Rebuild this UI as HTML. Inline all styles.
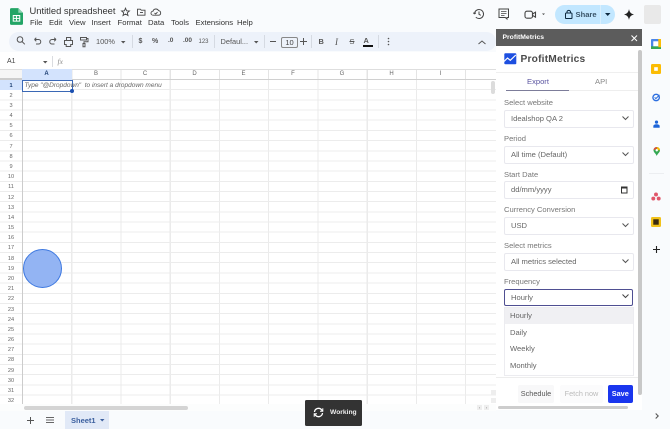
<!DOCTYPE html>
<html><head><meta charset="utf-8"><style>
html,body{margin:0;padding:0;background:#f9fbfd}
body{width:670px;height:429px;overflow:hidden;position:relative;background:#f9fbfd;font-family:"Liberation Sans",sans-serif;color:#444;filter:blur(.3px)}
.a{position:absolute;white-space:nowrap}
.m{top:18px;font-size:7.7px;line-height:10px;color:#333}
.t{top:37px;font-size:7.4px;line-height:10px;color:#555}
.ch{top:69px;height:11px;line-height:11px;font-size:6px;color:#666;text-align:center;width:49px}
.r{left:0;width:22px;text-align:center;font-size:5.6px;line-height:10px;color:#666;height:10px}
.lb{left:504px;font-size:7.6px;line-height:10px;color:#777}
.sel{left:504px;width:127.500px;height:16px;background:#fff;border:1px solid #e8e8ee;border-radius:2px;box-sizing:content-box;font-size:7.6px;line-height:16px;color:#666;text-indent:6px}
.opt{left:510px;font-size:7.6px;line-height:10px;color:#666}
svg{position:absolute;overflow:visible}
</style></head><body>

<!-- header -->
<svg style="left:10px;top:8px" width="13" height="17" viewBox="0 0 14 18"><path d="M1.500 0H9l5 5v11.500a1.500 1.500 0 0 1-1.500 1.500H1.500A1.500 1.500 0 0 1 0 16.500V1.500A1.500 1.500 0 0 1 1.500 0z" fill="#23a566"/><path d="M9 0l5 5H9z" fill="#8ed1b1"/><path d="M3.500 8h7v6h-7z" fill="none" stroke="#fff" stroke-width="1.100"/><path d="M3.500 11h7M7 8v6" stroke="#fff" stroke-width="1"/></svg>
<div class="a" style="left:29.500px;top:4px;font-size:9.400px;line-height:13px;color:#333">Untitled spreadsheet</div>
<svg style="left:121px;top:5.500px" width="50" height="12" viewBox="0 0 50 12" fill="none" stroke="#444" stroke-width=".9"><path d="M4.500 2.200l1.100 2.600 2.800.2-2.100 1.800.7 2.700-2.500-1.500L2 9.500l.7-2.700L.6 5l2.800-.2z"/><path d="M16.500 3.200h2.800l1 1h3.700v5h-7.500z"/><path d="M19 6.500h3"/><path d="M32 9.200a2 2 0 0 1 0-4 3 3 0 0 1 5.600-.5 2.300 2.300 0 0 1 .4 4.500z"/><path d="M33.500 7l1.200 1 1.800-1.900"/></svg>
<div class="a m" style="left:30px">File</div><div class="a m" style="left:49px">Edit</div><div class="a m" style="left:69px">View</div><div class="a m" style="left:91.500px">Insert</div><div class="a m" style="left:117.500px">Format</div><div class="a m" style="left:148px">Data</div><div class="a m" style="left:171px">Tools</div><div class="a m" style="left:195.500px">Extensions</div><div class="a m" style="left:237px">Help</div>

<svg style="left:473px;top:8px" width="12" height="12" viewBox="0 0 12 12" fill="none" stroke="#444" stroke-width="1"><path d="M1.500 6a4.500 4.500 0 1 1 1.300 3.200M1.500 6L.3 4.700M1.500 6l1.300-1.200"/><path d="M6 3.500V6.300l1.800 1"/></svg>
<svg style="left:498px;top:8px" width="12" height="12" viewBox="0 0 12 12" fill="none" stroke="#444" stroke-width="1"><path d="M1 1h9.500v8.500H9V11L7.300 9.500H1z"/><path d="M3 3.500h5.500M3 5.500h5.500M3 7.500h3.500" stroke-width=".7"/></svg>
<svg style="left:524px;top:9px" width="22" height="12" viewBox="0 0 22 12" fill="none" stroke="#444" stroke-width="1.100"><rect x="1" y="2.200" width="7.500" height="7" rx="2"/><path d="M8.500 5l3-1.800v5l-3-1.800z"/><path d="M18 4.500h3L19.500 6z" fill="#444" stroke="none"/></svg>
<div class="a" style="left:555px;top:5px;width:60px;height:19px;background:#c2e7ff;border-radius:10px"></div>
<div class="a" style="left:600px;top:5px;width:1px;height:19px;background:#d8effd"></div>
<svg style="left:564px;top:9px" width="10" height="11" viewBox="0 0 10 11" fill="none" stroke="#0d2a40" stroke-width="1"><rect x="1.500" y="4" width="6.500" height="5.500" rx=".8"/><path d="M3 4V2.800a1.800 1.800 0 0 1 3.500 0V4"/></svg>
<div class="a" style="left:575.500px;top:9px;font-size:7.600px;line-height:11px;font-weight:bold;color:#3a5468">Share</div>
<svg style="left:605px;top:13px" width="6" height="4"><path d="M0 0h5.500L2.700 3z" fill="#0d2a40"/></svg>
<svg style="left:624px;top:9px" width="10" height="11" viewBox="0 0 10 11"><path d="M5 0c.5 3 1.800 4.700 5 5.500-3.200.8-4.500 2.500-5 5.500-.5-3-1.800-4.700-5-5.500C3.200 4.700 4.500 3 5 0z" fill="#222"/></svg>
<div class="a" style="left:644px;top:5px;width:17px;height:19px;background:#e9e9e9;border-radius:2px"></div>

<!-- toolbar -->
<div class="a" style="left:9px;top:32px;width:487px;height:19px;background:#edf2fa;border-radius:10px"></div>
<svg style="left:15px;top:32px" width="320" height="20" viewBox="0 0 320 20" fill="none" stroke="#555" stroke-width="1">
<circle cx="5" cy="7.500" r="2.800"/><path d="M7 9.500l2.800 2.800"/>
<path d="M19.500 7.500h4a2.200 2.200 0 0 1 0 4.500h-2.500M19.500 7.500l1.800-1.700M19.500 7.500l1.800 1.700"/>
<path d="M41 7.500h-4a2.200 2.200 0 0 0 0 4.500h2.500M41 7.500l-1.800-1.700M41 7.500l-1.800 1.700"/>
<path d="M49.500 8.500h8v4h-1.800v2h-4.500v-2h-1.700zM51.500 8.500V5.500h4.200v3"/>
<path d="M65.500 5.500h6v2.500h-6zM71.500 6.500H73v3.300H69v1.500M68 11.500h2v3.200h-2z"/>
</svg>
<div class="a t" style="left:96px">100%</div>
<svg style="left:120.500px;top:40.500px" width="5" height="3"><path d="M0 0h4.500L2.200 2.500z" fill="#555"/></svg>
<div class="a" style="left:132px;top:35px;width:1px;height:13px;background:#d5dae2"></div>
<div class="a t" style="left:138.500px;font-weight:bold;font-size:7px">$</div>
<div class="a t" style="left:152px;font-size:7px;font-weight:bold">%</div>
<div class="a t" style="left:168px;font-size:6.500px;top:36px;font-weight:bold">.0</div>
<div class="a t" style="left:183px;font-size:6.500px;top:36px;font-weight:bold">.00</div>
<div class="a t" style="left:198.500px;font-size:6px">123</div>
<div class="a" style="left:214px;top:35px;width:1px;height:13px;background:#d5dae2"></div>
<div class="a t" style="left:220.500px">Defaul...</div>
<svg style="left:253.500px;top:40.500px" width="5" height="3"><path d="M0 0h4.500L2.200 2.500z" fill="#555"/></svg>
<div class="a" style="left:264px;top:35px;width:1px;height:13px;background:#d5dae2"></div>
<div class="a" style="left:270px;top:41px;width:6px;height:1px;background:#555"></div>
<div class="a" style="left:281px;top:36.500px;width:15px;height:9.500px;border:1px solid #888;border-radius:2px;text-align:center;font-size:7.500px;line-height:9.500px;color:#444">10</div>
<svg style="left:300px;top:38px" width="7" height="7"><path d="M3.500 0v7M0 3.500h7" stroke="#555"/></svg>
<div class="a" style="left:311px;top:35px;width:1px;height:13px;background:#d5dae2"></div>
<div class="a t" style="left:318.500px;font-weight:bold">B</div>
<div class="a t" style="left:335px;font-style:italic;font-family:'Liberation Serif',serif;font-size:9px;top:36.500px">I</div>
<div class="a t" style="left:349.500px;text-decoration:line-through">S</div>
<div class="a t" style="left:363.500px;top:35.500px;font-weight:bold">A</div>
<div class="a" style="left:362.500px;top:45px;width:10.500px;height:1.500px;background:#111"></div>
<div class="a" style="left:378px;top:35px;width:1px;height:13px;background:#d5dae2"></div>
<svg style="left:386.500px;top:37px" width="3" height="10"><circle cx="1.500" cy="1.500" r=".8" fill="#555"/><circle cx="1.500" cy="4.500" r=".8" fill="#555"/><circle cx="1.500" cy="7.500" r=".8" fill="#555"/></svg>
<svg style="left:478px;top:39.500px" width="8" height="5"><path d="M.5 4L4 1l3.500 3" fill="none" stroke="#555"/></svg>

<!-- formula bar -->
<div class="a" style="left:0;top:52px;width:496px;height:17px;background:#fff"></div>
<div class="a" style="left:7px;top:56.500px;font-size:7px;line-height:10px;color:#444">A1</div>
<svg style="left:42.500px;top:60.500px" width="5" height="3"><path d="M0 0h4.500L2.200 2.500z" fill="#555"/></svg>
<div class="a" style="left:52px;top:56px;width:1px;height:11px;background:#dadce0"></div>
<div class="a" style="left:57.500px;top:56.500px;font-size:7.500px;line-height:10px;font-style:italic;font-family:'Liberation Serif',serif;color:#888">fx</div>

<!-- grid -->
<div class="a" style="left:0;top:69px;width:496px;height:335px;background-color:#fff;background-image:repeating-linear-gradient(to right,#ebebeb 0,#ebebeb 1px,transparent 1px,transparent 49.250px);background-position:22px 0;background-size:100% 100%"></div>
<div class="a" style="left:0;top:69px;width:22px;height:335px;background:#fff"></div>
<div class="a" style="left:0;top:80px;width:496px;height:324px;background-image:repeating-linear-gradient(to bottom,transparent 0,transparent 9.180px,#ececec 9.180px,#ececec 10.180px)"></div>
<div class="a" style="left:0;top:69px;width:496px;height:11px;background:#fff;border-top:1px solid #dedede;border-bottom:1px solid #d0d0d0;box-sizing:border-box;background-image:repeating-linear-gradient(to right,#e4e4e4 0,#e4e4e4 1px,transparent 1px,transparent 49.250px);background-position:22px 0"></div>
<div class="a" style="left:0;top:69px;width:22px;height:11px;background:#f5f5f5;border-top:1px solid #dedede;border-bottom:2px solid #cccccc;box-sizing:border-box"></div>
<div class="a" style="left:22px;top:69px;width:1px;height:335px;background:#cccccc"></div>
<div class="a" style="left:22px;top:69px;width:50px;height:11px;background:#d3e3fd"></div>
<div class="a" style="left:0;top:80px;width:22px;height:10px;background:#d3e3fd"></div>

<div class="a ch" style="left:22px;font-weight:bold;color:#1d3f73">A</div><div class="a ch" style="left:71.500px">B</div><div class="a ch" style="left:120.500px">C</div><div class="a ch" style="left:170px">D</div><div class="a ch" style="left:219px">E</div><div class="a ch" style="left:268.500px">F</div><div class="a ch" style="left:317.500px">G</div><div class="a ch" style="left:367px">H</div><div class="a ch" style="left:416px">I</div>

<div class="a r" style="top:80.500px;font-weight:bold;color:#1d3f73">1</div><div class="a r" style="top:90.700px">2</div><div class="a r" style="top:100.900px">3</div><div class="a r" style="top:111px">4</div><div class="a r" style="top:121.200px">5</div><div class="a r" style="top:131.400px">6</div><div class="a r" style="top:141.600px">7</div><div class="a r" style="top:151.800px">8</div><div class="a r" style="top:161.900px">9</div><div class="a r" style="top:172.100px">10</div><div class="a r" style="top:182.300px">11</div><div class="a r" style="top:192.500px">12</div><div class="a r" style="top:202.700px">13</div><div class="a r" style="top:212.800px">14</div><div class="a r" style="top:223px">15</div><div class="a r" style="top:233.200px">16</div><div class="a r" style="top:243.400px">17</div><div class="a r" style="top:253.600px">18</div><div class="a r" style="top:263.700px">19</div><div class="a r" style="top:273.900px">20</div><div class="a r" style="top:284.100px">21</div><div class="a r" style="top:294.300px">22</div><div class="a r" style="top:304.500px">23</div><div class="a r" style="top:314.600px">24</div><div class="a r" style="top:324.800px">25</div><div class="a r" style="top:335px">26</div><div class="a r" style="top:345.200px">27</div><div class="a r" style="top:355.400px">28</div><div class="a r" style="top:365.500px">29</div><div class="a r" style="top:375.700px">30</div><div class="a r" style="top:385.900px">31</div><div class="a r" style="top:396.100px">32</div>

<!-- selected cell -->
<div class="a" style="left:22px;top:80px;width:49px;height:10px;border:1px solid #3b68b5;box-sizing:content-box;margin:-.5px 0 0 0;background:#fff"></div>
<div class="a" style="left:70px;top:89px;width:4px;height:4px;border-radius:50%;background:#1a4fb0"></div>
<div class="a" style="left:24.500px;top:80.500px;font-size:6.500px;line-height:10px;font-style:italic;color:#666">Type "@Dropdown"&nbsp; to insert a dropdown menu</div>

<!-- circle -->
<div class="a" style="left:22.500px;top:249px;width:39px;height:39px;box-sizing:border-box;border-radius:50%;background:#93b4f3;border:1.500px solid #3d78e0"></div>

<!-- sheet scrollbars -->
<div class="a" style="left:491px;top:81px;width:4px;height:13px;background:#dcdcdc;border-radius:2px"></div>
<div class="a" style="left:0;top:404px;width:496px;height:7px;background:#fcfdfd"></div>
<div class="a" style="left:24px;top:405.500px;width:164px;height:4px;background:#d4d4d4;border-radius:2px"></div>
<div class="a" style="left:477px;top:405px;width:5px;height:5px;background:#eee;font-size:4px;line-height:5px;text-align:center;color:#777">‹</div>
<div class="a" style="left:484px;top:405px;width:5px;height:5px;background:#eee;font-size:4px;line-height:5px;text-align:center;color:#777">›</div>
<div class="a" style="left:491px;top:390px;width:5px;height:5px;background:#eee"></div>
<div class="a" style="left:491px;top:398px;width:5px;height:5px;background:#eee"></div>

<!-- bottom bar -->
<svg style="left:26.500px;top:416.500px" width="7" height="7"><path d="M3.500 0v7M0 3.500h7" stroke="#555"/></svg>
<svg style="left:45.500px;top:417px" width="8" height="6"><path d="M0 .5h8M0 3h8M0 5.500h8" stroke="#666"/></svg>
<div class="a" style="left:65px;top:411px;width:44px;height:18px;background:#e1e9f7"></div>
<div class="a" style="left:71px;top:415.500px;font-size:7.500px;line-height:10px;font-weight:bold;color:#3b5f9e">Sheet1</div>
<svg style="left:100px;top:419px" width="5" height="3"><path d="M0 0h4.500L2.200 2.500z" fill="#3b5f9e"/></svg>

<!-- Working toast -->
<div class="a" style="left:305px;top:399.500px;width:56.500px;height:26px;background:#333;border-radius:1.500px"></div>
<svg style="left:312.500px;top:407px" width="11" height="11" viewBox="0 0 11 11" fill="none" stroke="#fff" stroke-width="1.300"><path d="M1.500 5a4 4 0 0 1 7-2.300L9.500 4M9.500 6a4 4 0 0 1-7 2.300L1.500 7"/><path d="M9.800 1.200v3H7M1.200 9.800v-3H4" stroke-width="1"/></svg>
<div class="a" style="left:330px;top:408px;font-size:6.700px;line-height:10px;color:#eee;font-weight:bold">Working</div>

<!-- side panel -->
<div class="a" style="left:496px;top:46px;width:146px;height:364px;background:#fff"></div>
<div class="a" style="left:496px;top:29px;width:146px;height:17px;background:#5c5c5c"></div>
<div class="a" style="left:502.500px;top:32.500px;font-size:6.800px;line-height:10px;font-weight:bold;color:#fff">ProfitMetrics</div>
<svg style="left:631px;top:35px" width="7" height="7"><path d="M.5.500l5.500 5.500M6 .5L.5 6" stroke="#fff" stroke-width="1"/></svg>
<div class="a" style="left:638px;top:50px;width:4px;height:345px;background:#c8c8c8;border-radius:2px"></div>
<div class="a" style="left:498px;top:406px;width:130px;height:3px;background:#cdcdcd;border-radius:1.500px"></div>

<svg style="left:504px;top:53px" width="13" height="12" viewBox="0 0 13 12"><rect width="12" height="11" x=".3" y=".3" rx="1" fill="#1d4fe0"/><path d="M0 8.500l3.500-3.500 2.800 2.300L11.800 2" fill="none" stroke="#fff" stroke-width="1.200"/></svg>
<div class="a" style="left:520.500px;top:51.500px;font-size:10.200px;line-height:15px;font-weight:bold;color:#4a4a4a;letter-spacing:.2px">ProfitMetrics</div>
<div class="a" style="left:496px;top:72px;width:142px;height:1px;background:#efefef"></div>
<div class="a" style="left:527px;top:76.500px;font-size:7.600px;line-height:10px;color:#5b55a0">Export</div>
<div class="a" style="left:595px;top:76.500px;font-size:7.600px;line-height:10px;color:#888">API</div>
<div class="a" style="left:506px;top:90px;width:63px;height:1px;background:#7d7d9a"></div>
<div class="a" style="left:569px;top:90px;width:69px;height:1px;background:#eee"></div>

<div class="a lb" style="top:98px">Select website</div>
<div class="a sel" style="top:110px">Idealshop QA 2</div>
<div class="a lb" style="top:134px">Period</div>
<div class="a sel" style="top:145.500px">All time (Default)</div>
<div class="a lb" style="top:169.500px">Start Date</div>
<div class="a sel" style="top:181px">dd/mm/yyyy</div>
<div class="a lb" style="top:205px">Currency Conversion</div>
<div class="a sel" style="top:217px">USD</div>
<div class="a lb" style="top:241px">Select metrics</div>
<div class="a sel" style="top:252.500px">All metrics selected</div>
<div class="a lb" style="top:276.500px">Frequency</div>
<div class="a sel" style="top:288.500px;height:15px;border:1.200px solid #4f4f92;line-height:15px;width:127px">Hourly</div>

<svg style="left:621.500px;top:116px" width="7" height="5"><path d="M.5.500L3.500 3.500 6.500.5" fill="none" stroke="#555"/></svg>
<svg style="left:621.500px;top:151.500px" width="7" height="5"><path d="M.5.500L3.500 3.500 6.500.5" fill="none" stroke="#555"/></svg>
<svg style="left:620.500px;top:185.500px" width="7" height="8"><rect x=".5" y="1" width="5.500" height="6" fill="none" stroke="#333"/><rect x=".5" y="1" width="5.500" height="1.500" fill="#333"/></svg>
<svg style="left:621.500px;top:223px" width="7" height="5"><path d="M.5.500L3.500 3.500 6.500.5" fill="none" stroke="#555"/></svg>
<svg style="left:621.500px;top:258.500px" width="7" height="5"><path d="M.5.500L3.500 3.500 6.500.5" fill="none" stroke="#555"/></svg>
<svg style="left:621.500px;top:294px" width="7" height="5"><path d="M.5.500L3.500 3.500 6.500.5" fill="none" stroke="#444"/></svg>

<!-- dropdown -->
<div class="a" style="left:504px;top:307px;width:127.500px;height:67px;background:#fff;border:1px solid #ececf0;box-sizing:content-box"></div>
<div class="a" style="left:505px;top:307.500px;width:127.500px;height:16.500px;background:#f0f0f3"></div>
<div class="a opt" style="top:310.500px">Hourly</div>
<div class="a opt" style="top:327.500px">Daily</div>
<div class="a opt" style="top:344px">Weekly</div>
<div class="a opt" style="top:360.500px">Monthly</div>

<div class="a" style="left:496px;top:377px;width:142px;height:1px;background:#ededed"></div>
<div class="a" style="left:518px;top:385px;width:36px;height:18px;background:#f8f8f9;border-radius:2px;text-align:center;font-size:7.300px;line-height:18px;color:#555">Schedule</div>
<div class="a" style="left:560px;top:385px;width:43px;height:18px;background:#fbfbfc;border-radius:2px;text-align:center;font-size:7.300px;line-height:18px;color:#bbb">Fetch now</div>
<div class="a" style="left:608px;top:385px;width:24.500px;height:18px;background:#1a36ee;border-radius:2px;text-align:center;font-size:7.300px;line-height:18px;color:#fff;font-weight:bold">Save</div>

<!-- right rail -->
<svg style="left:651px;top:38.500px" width="10" height="10" viewBox="0 0 11 11"><rect x="0" y="0" width="11" height="11" rx="1" fill="#4a86e8"/><rect x="0" y="8" width="11" height="3" fill="#34a853"/><rect x="8" y="0" width="3" height="9" fill="#fbbc04"/><rect x="2.500" y="2.500" width="5.500" height="5.500" fill="#fff"/></svg>
<svg style="left:651px;top:64px" width="10" height="10" viewBox="0 0 11 11"><rect width="11" height="11" rx="1.500" fill="#fbbc04"/><rect x="3.500" y="3.500" width="4" height="4" fill="#fff"/></svg>
<svg style="left:652px;top:92.500px" width="9" height="9" viewBox="0 0 12 12" fill="none"><circle cx="5.500" cy="6" r="4.300" stroke="#2d6fe0" stroke-width="1.800"/><path d="M3.500 5.800l1.700 1.700L10 2.500" stroke="#2d6fe0" stroke-width="1.300"/></svg>
<svg style="left:653px;top:120px" width="7" height="8.500" viewBox="0 0 10 12"><circle cx="5" cy="3" r="2.300" fill="#1d64d8"/><path d="M.5 11V8.500C.5 7 2.500 6 5 6s4.500 1 4.500 2.500V11z" fill="#1d64d8"/></svg>
<svg style="left:653px;top:147px" width="7.500" height="9" viewBox="0 0 9 11"><path d="M4.500 0A4 4 0 0 1 8.500 4C8.500 6.500 5.500 8 4.500 11 3.500 8 .5 6.500.5 4A4 4 0 0 1 4.500 0z" fill="#34a853"/><path d="M4.500 0A4 4 0 0 1 8.500 4L6 4 4.500 2z" fill="#fbbc04"/><path d="M.5 4A4 4 0 0 1 4.500 0V2z" fill="#ea4335"/><circle cx="4.500" cy="4" r="1.500" fill="#fff"/></svg>
<div class="a" style="left:649px;top:173px;width:15px;height:1px;background:#eceef1"></div>
<svg style="left:651px;top:191.500px" width="10" height="9" viewBox="0 0 12 11" fill="#e0566a"><circle cx="6" cy="3" r="2.400"/><circle cx="2.700" cy="8" r="2.400"/><circle cx="9.300" cy="8" r="2.400"/></svg>
<svg style="left:651px;top:217px" width="10" height="10" viewBox="0 0 11 11"><rect width="11" height="11" rx="1.500" fill="#f2c21a"/><rect x="2.500" y="2.500" width="6" height="6" fill="#3a2a10"/></svg>
<svg style="left:653px;top:246px" width="7" height="7"><path d="M3.500 0v7M0 3.500h7" stroke="#222" stroke-width="1.100"/></svg>
<svg style="left:654.500px;top:412.500px" width="4" height="6"><path d="M.7.500L3.200 3 .7 5.500" fill="none" stroke="#555" stroke-width="1.100"/></svg>

</body></html>
